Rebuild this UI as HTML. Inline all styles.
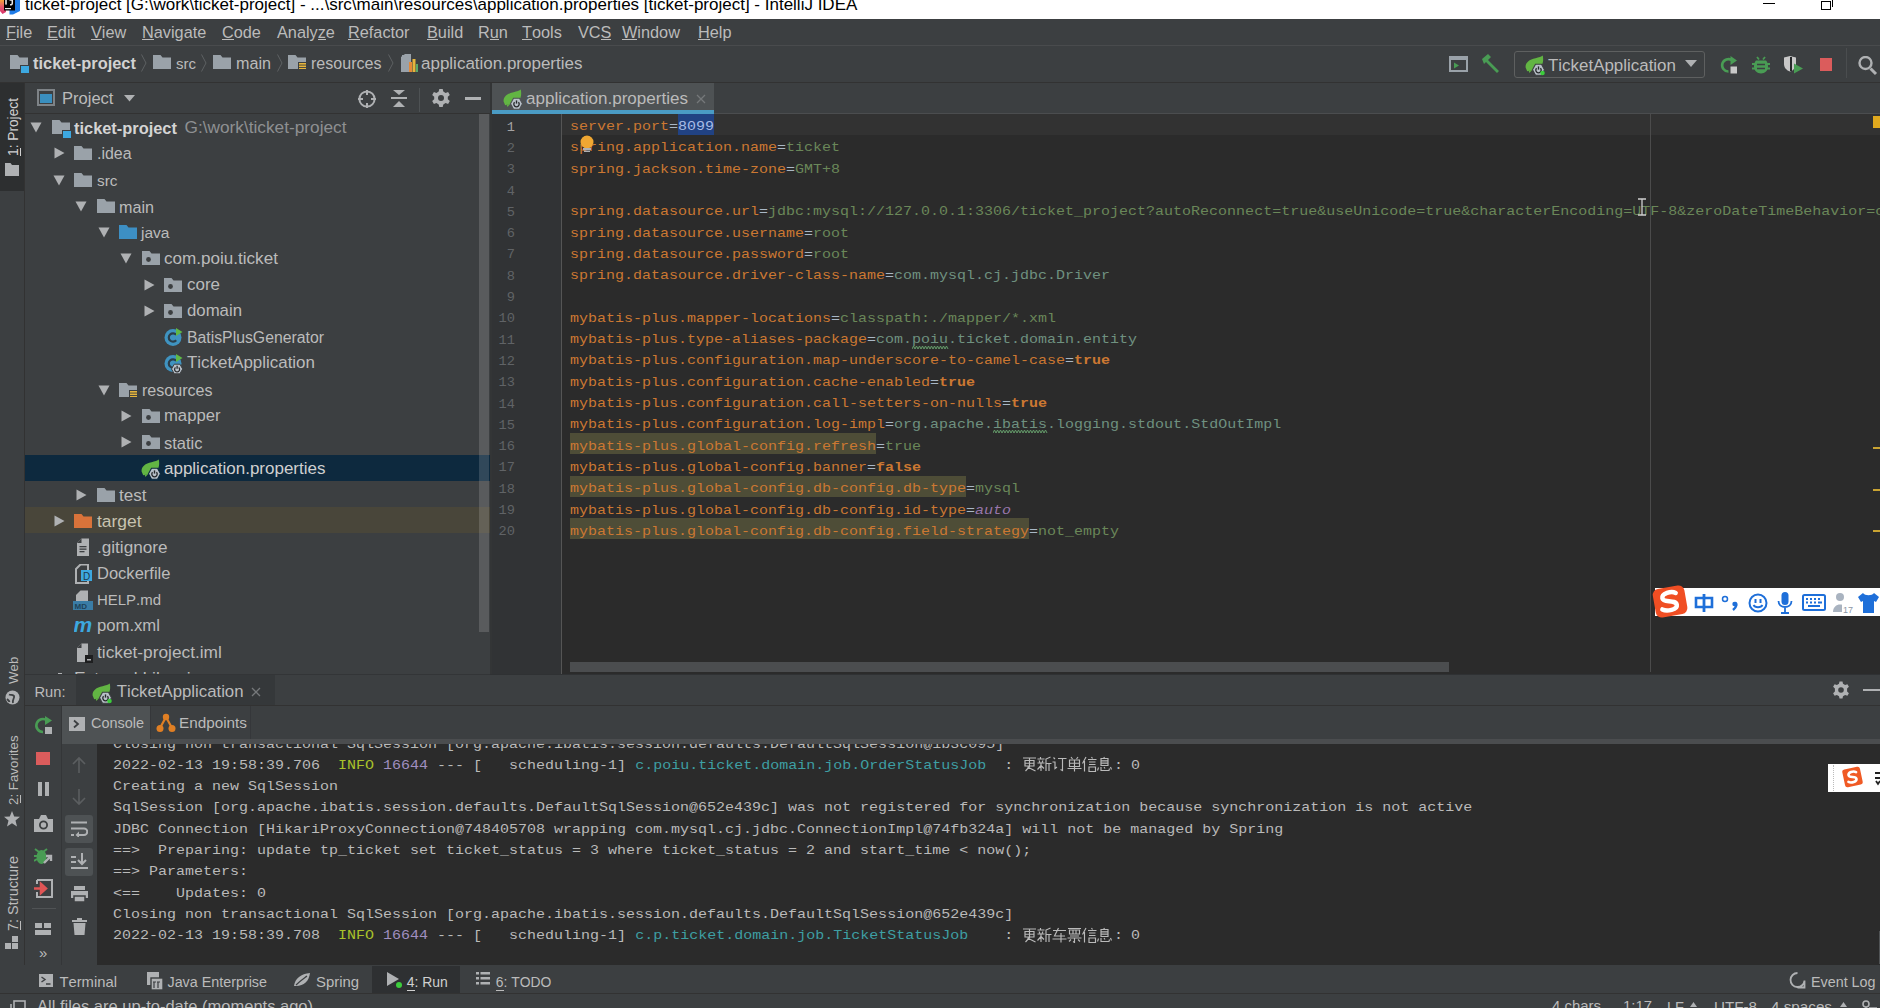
<!DOCTYPE html>
<html><head><meta charset="utf-8">
<style>
*{margin:0;padding:0;box-sizing:border-box}
html,body{width:1880px;height:1008px;overflow:hidden;background:#3C3F41;font-family:"Liberation Sans",sans-serif;color:#BBBBBB}
.a{position:absolute}
.t{position:absolute;white-space:pre;line-height:1;font-kerning:none}
</style></head><body>
<div class="a" style="left:0px;top:0px;width:1880px;height:19px;background:#FFFFFF;"></div>
<div class="a" style="left:0px;top:19px;width:1880px;height:26px;background:#3C3F41;"></div>
<div class="a" style="left:0px;top:45px;width:1880px;height:1px;background:#494B4D;"></div>
<div class="a" style="left:0px;top:46px;width:1880px;height:36px;background:#3C3F41;"></div>
<div class="a" style="left:0px;top:82px;width:1880px;height:1px;background:#323232;"></div>
<div class="a" style="left:0px;top:83px;width:24px;height:910px;background:#3C3F41;"></div>
<div class="a" style="left:0px;top:83px;width:24px;height:108px;background:#2D2F30;"></div>
<div class="a" style="left:24px;top:83px;width:1px;height:910px;background:#323232;"></div>
<div class="a" style="left:25px;top:83px;width:465px;height:30px;background:#3C3F41;"></div>
<div class="a" style="left:25px;top:113px;width:465px;height:1px;background:#323232;"></div>
<div class="a" style="left:25px;top:114px;width:465px;height:560px;background:#3C3F41;"></div>
<div class="a" style="left:492px;top:83px;width:1388px;height:30px;background:#3C3F41;"></div>
<div class="a" style="left:492px;top:83px;width:222px;height:27px;background:#4E5254;"></div>
<div class="a" style="left:492px;top:110px;width:222px;height:4px;background:#4A9BC4;"></div>
<div class="a" style="left:714px;top:113px;width:1166px;height:1px;background:#4B4D4F;"></div>
<div class="a" style="left:490px;top:83px;width:2px;height:591px;background:#333536;"></div>
<div class="a" style="left:492px;top:114px;width:70px;height:560px;background:#313335;"></div>
<div class="a" style="left:561px;top:114px;width:1px;height:560px;background:#555555;"></div>
<div class="a" style="left:562px;top:114px;width:1318px;height:560px;background:#2B2B2B;"></div>
<div class="a" style="left:25px;top:674px;width:1855px;height:1px;background:#2F3133;"></div>
<div class="a" style="left:25px;top:675px;width:1855px;height:30px;background:#3C3F41;"></div>
<div class="a" style="left:25px;top:705px;width:1855px;height:1px;background:#323232;"></div>
<div class="a" style="left:25px;top:706px;width:37px;height:259px;background:#3C3F41;"></div>
<div class="a" style="left:61px;top:706px;width:1px;height:259px;background:#343638;"></div>
<div class="a" style="left:62px;top:706px;width:1818px;height:33px;background:#3C3F41;"></div>
<div class="a" style="left:62px;top:739px;width:1818px;height:5px;background:#4B4D4F;"></div>
<div class="a" style="left:62px;top:744px;width:35px;height:221px;background:#3C3F41;"></div>
<div class="a" style="left:97px;top:744px;width:1783px;height:221px;background:#2B2B2B;"></div>
<div class="a" style="left:0px;top:965px;width:1880px;height:28px;background:#3C3F41;"></div>
<div class="a" style="left:0px;top:993px;width:1880px;height:1px;background:#323232;"></div>
<div class="a" style="left:0px;top:994px;width:1880px;height:14px;background:#3C3F41;"></div>
<div class="t" style="left:25px;top:-4.39px;font-size:17px;color:#000000;">ticket-project [G:\work\ticket-project] - ...\src\main\resources\application.properties [ticket-project] - IntelliJ IDEA</div>
<div class="a" style="left:1763px;top:3px;width:12px;height:1.3px;background:#000;"></div>
<div class="a" style="left:1821px;top:1px;width:10px;height:9px;border:1.5px solid #000;background:#fff"></div>
<div class="a" style="left:1823px;top:-2px;width:10px;height:9px;border:1.5px solid #000;border-left:none;border-bottom:none"></div>
<svg class="a" style="left:0px;top:0px;" width="21" height="15" viewBox="0 0 21 15"><defs><linearGradient id="ijg" x1="0" y1="0" x2="0" y2="1"><stop offset="0" stop-color="#F5A13A"/><stop offset="0.5" stop-color="#E8556A"/><stop offset="1" stop-color="#D6336C"/></linearGradient></defs><path d="M0 0H6V12L2.5 14L0 11Z" fill="url(#ijg)"/><path d="M12 0H20V11L13 14.5H9.5V10Z" fill="#1E7CE8"/><rect x="4" y="0" width="11" height="10.5" fill="#000"/><rect x="5.2" y="0" width="1.6" height="4.6" fill="#E8E8E8"/><path d="M9.5 0H12.3V3.2C12.3 4.4 11.5 4.8 10 4.8" stroke="#E8E8E8" stroke-width="1.5" fill="none"/><rect x="5" y="8" width="6" height="1.2" fill="#E8E8E8"/></svg>
<div class="t" style="left:6px;top:24.20px;font-size:16.3px;color:#BBBBBB;">File</div>
<div class="t" style="left:47px;top:24.20px;font-size:16.3px;color:#BBBBBB;">Edit</div>
<div class="t" style="left:91px;top:24.20px;font-size:16.3px;color:#BBBBBB;">View</div>
<div class="t" style="left:142px;top:24.20px;font-size:16.3px;color:#BBBBBB;">Navigate</div>
<div class="t" style="left:222px;top:24.20px;font-size:16.3px;color:#BBBBBB;">Code</div>
<div class="t" style="left:277px;top:24.20px;font-size:16.3px;color:#BBBBBB;">Analyze</div>
<div class="t" style="left:348px;top:24.20px;font-size:16.3px;color:#BBBBBB;">Refactor</div>
<div class="t" style="left:427px;top:24.20px;font-size:16.3px;color:#BBBBBB;">Build</div>
<div class="t" style="left:478px;top:24.20px;font-size:16.3px;color:#BBBBBB;">Run</div>
<div class="t" style="left:522px;top:24.20px;font-size:16.3px;color:#BBBBBB;">Tools</div>
<div class="t" style="left:578px;top:24.20px;font-size:16.3px;color:#BBBBBB;">VCS</div>
<div class="t" style="left:622px;top:24.20px;font-size:16.3px;color:#BBBBBB;">Window</div>
<div class="t" style="left:698px;top:24.20px;font-size:16.3px;color:#BBBBBB;">Help</div>
<div class="a" style="left:6.0px;top:39px;width:10.0px;height:1.2px;background:#BBBBBB;"></div>
<div class="a" style="left:47.0px;top:39px;width:10.9px;height:1.2px;background:#BBBBBB;"></div>
<div class="a" style="left:91.0px;top:39px;width:10.9px;height:1.2px;background:#BBBBBB;"></div>
<div class="a" style="left:142.0px;top:39px;width:11.8px;height:1.2px;background:#BBBBBB;"></div>
<div class="a" style="left:222.0px;top:39px;width:11.8px;height:1.2px;background:#BBBBBB;"></div>
<div class="a" style="left:317.8px;top:39px;width:8.2px;height:1.2px;background:#BBBBBB;"></div>
<div class="a" style="left:348.0px;top:39px;width:11.8px;height:1.2px;background:#BBBBBB;"></div>
<div class="a" style="left:427.0px;top:39px;width:10.9px;height:1.2px;background:#BBBBBB;"></div>
<div class="a" style="left:489.8px;top:39px;width:9.1px;height:1.2px;background:#BBBBBB;"></div>
<div class="a" style="left:522.0px;top:39px;width:10.0px;height:1.2px;background:#BBBBBB;"></div>
<div class="a" style="left:600.6px;top:39px;width:10.9px;height:1.2px;background:#BBBBBB;"></div>
<div class="a" style="left:622.0px;top:39px;width:15.4px;height:1.2px;background:#BBBBBB;"></div>
<div class="a" style="left:698.0px;top:39px;width:11.8px;height:1.2px;background:#BBBBBB;"></div>
<svg class="a" style="left:10px;top:55px;" width="18" height="14" viewBox="0 0 18 14"><path d="M0 0H7.5L9.5 2.5H18V14H0Z" fill="#9AA2A9"/></svg>
<div class="a" style="left:21px;top:66px;width:8px;height:7px;background:#3DA8E0;"></div>
<div class="a" style="left:20px;top:65px;width:10px;height:9px;border:1px solid #3C3F41;background:#3DA8E0"></div>
<div class="t" style="left:33px;top:55.11px;font-size:16.4px;color:#D2D2D2;font-weight:bold;">ticket-project</div>
<svg class="a" style="left:141px;top:54px;" width="6" height="18" viewBox="0 0 6 18"><path d="M0.5 0.5L5 9L0.5 17.5" stroke="#5E6163" stroke-width="1" fill="none"/></svg>
<svg class="a" style="left:153px;top:55px;" width="18" height="14" viewBox="0 0 18 14"><path d="M0 0H7.5L9.5 2.5H18V14H0Z" fill="#9AA2A9"/></svg>
<div class="t" style="left:176px;top:56.30px;font-size:15.0px;color:#BBBBBB;">src</div>
<svg class="a" style="left:201px;top:54px;" width="6" height="18" viewBox="0 0 6 18"><path d="M0.5 0.5L5 9L0.5 17.5" stroke="#5E6163" stroke-width="1" fill="none"/></svg>
<svg class="a" style="left:213px;top:55px;" width="18" height="14" viewBox="0 0 18 14"><path d="M0 0H7.5L9.5 2.5H18V14H0Z" fill="#9AA2A9"/></svg>
<div class="t" style="left:236px;top:55.33px;font-size:16.15px;color:#BBBBBB;">main</div>
<svg class="a" style="left:277px;top:54px;" width="6" height="18" viewBox="0 0 6 18"><path d="M0.5 0.5L5 9L0.5 17.5" stroke="#5E6163" stroke-width="1" fill="none"/></svg>
<svg class="a" style="left:288px;top:55px;" width="18" height="14" viewBox="0 0 18 14"><path d="M0 0H7.5L9.5 2.5H18V14H0Z" fill="#9AA2A9"/><rect x="10" y="7" width="8" height="8" fill="#3C3F41"/><rect x="11" y="8" width="7" height="1.6" fill="#E6B53C"/><rect x="11" y="10.5" width="7" height="1.6" fill="#E6B53C"/><rect x="11" y="13" width="7" height="1.6" fill="#E6B53C"/></svg>
<div class="t" style="left:311px;top:55.40px;font-size:16.06px;color:#BBBBBB;">resources</div>
<svg class="a" style="left:388px;top:54px;" width="6" height="18" viewBox="0 0 6 18"><path d="M0.5 0.5L5 9L0.5 17.5" stroke="#5E6163" stroke-width="1" fill="none"/></svg>
<svg class="a" style="left:400px;top:53px;" width="18" height="20" viewBox="0 0 18 20"><path d="M2 2H9V8H2Z" fill="#9AA2A9"/><path d="M0 8H2V2L6 -1" fill="none"/><path d="M1 4L5 1H11V19H1Z" fill="#9AA2A9"/><rect x="9" y="9" width="3" height="10" fill="#E2893A"/><rect x="12.5" y="6" width="3" height="13" fill="#E6B53C"/><rect x="16" y="11" width="2" height="8" fill="#59A869"/></svg>
<div class="t" style="left:421px;top:54.61px;font-size:16.99px;color:#BBBBBB;">application.properties</div>
<svg class="a" style="left:1449px;top:56px;" width="19" height="17" viewBox="0 0 19 17"><rect x="1" y="1" width="17" height="14" fill="none" stroke="#9AA2A9" stroke-width="2"/><rect x="1" y="1" width="17" height="3" fill="#9AA2A9"/><path d="M5 6.5L10 9.5L5 12.5Z" fill="#499C54"/></svg>
<svg class="a" style="left:1480px;top:53px;" width="22" height="20" viewBox="0 0 22 20"><path d="M2 6L8 1L11 4L8 7L19 18L17 20L6 9L4 11Z" fill="#499C54"/></svg>
<div class="a" style="left:1514px;top:51px;width:191px;height:27px;border:1px solid #5E6060;border-radius:3px;background:#3C3F41"></div>
<svg class="a" style="left:1525px;top:55px;" width="21" height="21" viewBox="0 0 21 21"><path d="M0.6 12.5C0.2 7.5 4.5 4.5 10.5 3.3C14 2.6 16.5 1.5 17.8 0.6C18.6 5 18.4 9.5 15 12C11.5 14.5 6 15.2 2.2 16.3Z" fill="#62B543"/><path d="M3.5 15.5L4.5 18L7 15" fill="#62B543"/><path d="M7.5 14.8L10.5 9.3H16.5L19.5 14.8L16.5 20.3H10.5Z" fill="#B9C1C9" stroke="#3C3F41" stroke-width="1.1"/><path d="M11.6 13.2A2.7 2.7 0 1 0 15.4 13.2" stroke="#26282A" stroke-width="1.3" fill="none"/><path d="M13.5 11.4V14.6" stroke="#26282A" stroke-width="1.4"/><circle cx="17.5" cy="18" r="2.3" fill="#3CCC3C"/></svg>
<div class="t" style="left:1548px;top:57.67px;font-size:16.93px;color:#BBBBBB;">TicketApplication</div>
<svg class="a" style="left:1685px;top:60px;" width="12" height="8" viewBox="0 0 12 8"><path d="M0 0H12L6 7Z" fill="#AFB1B3"/></svg>
<svg class="a" style="left:1720px;top:56px;" width="18" height="18" viewBox="0 0 18 18"><path d="M8.5 15.5A6.2 6.2 0 1 1 12 4.3" stroke="#499C54" stroke-width="2.6" fill="none"/><path d="M10.5 0L17 4.5L10.5 9Z" fill="#499C54"/><rect x="10.5" y="10.5" width="6.5" height="7" fill="#C8C8C8"/></svg>
<svg class="a" style="left:1752px;top:56px;" width="18" height="18" viewBox="0 0 18 18"><path d="M5 1L7 3.5M13 1L11 3.5" stroke="#499C54" stroke-width="1.8"/><path d="M4 4.5H14C15.5 6 16 8 16 10.5C16 14.5 13 17.5 9 17.5C5 17.5 2 14.5 2 10.5C2 8 2.5 6 4 4.5Z" fill="#499C54"/><path d="M0 8H3M15 8H18M0 12.5H3M15 12.5H18" stroke="#499C54" stroke-width="1.8"/><path d="M5 8.5H13M5 12.5H13" stroke="#3C3F41" stroke-width="1.6"/></svg>
<svg class="a" style="left:1783px;top:56px;" width="21" height="18" viewBox="0 0 21 18"><path d="M1 1.5L7 0L13 1.5V8C13 11.5 10.5 14.5 7 15.5C3.5 14.5 1 11.5 1 8Z" fill="#C8C8C8"/><path d="M8 1V15" stroke="#26282A" stroke-width="2"/><path d="M11 7.5L20 12.5L11 17.5Z" fill="#499C54"/></svg>
<div class="a" style="left:1820px;top:58px;width:12px;height:12.5px;background:#DB5C5C;"></div>
<div class="a" style="left:1846px;top:48px;width:1px;height:30px;background:#4A4D4F;"></div>
<svg class="a" style="left:1858px;top:56px;" width="20" height="20" viewBox="0 0 20 20"><circle cx="7.5" cy="7" r="6" stroke="#AFB1B3" stroke-width="2.4" fill="none"/><path d="M12.5 12.5L18 18" stroke="#AFB1B3" stroke-width="3"/></svg>
<div class="t" style="left:6.87px;top:156px;font-size:13.73px;color:#D0D0D0;transform:rotate(-90deg);transform-origin:0 0;">1: Project</div>
<div class="a" style="left:19.5px;top:148px;width:1px;height:8px;background:#D0D0D0;"></div>
<svg class="a" style="left:5px;top:163px;" width="14" height="13" viewBox="0 0 14 13"><path d="M0 0H5.5L7 2H14V13H0Z" fill="#AFB1B3"/></svg>
<div class="t" style="left:6.91px;top:684px;font-size:13.33px;color:#BBBBBB;transform:rotate(-90deg);transform-origin:0 0;">Web</div>
<svg class="a" style="left:5px;top:690px;" width="15" height="15" viewBox="0 0 15 15"><circle cx="7.5" cy="7.5" r="7" fill="#AFB1B3"/><path d="M4 4.5C6 5.5 7 4 9 6C10 8 7 9.5 8 13M2 9C3 10 4 10.5 4.5 12" stroke="#3C3F41" stroke-width="1.8" fill="none"/></svg>
<div class="t" style="left:6.91px;top:804.5px;font-size:13.34px;color:#BBBBBB;transform:rotate(-90deg);transform-origin:0 0;">2: Favorites</div>
<div class="a" style="left:19.5px;top:795px;width:1px;height:8px;background:#BBBBBB;"></div>
<svg class="a" style="left:4px;top:811px;" width="16" height="16" viewBox="0 0 16 16"><path d="M8 0L10.2 5.5L16 5.8L11.5 9.5L13 15.5L8 12.2L3 15.5L4.5 9.5L0 5.8L5.8 5.5Z" fill="#AFB1B3"/></svg>
<div class="t" style="left:5.91px;top:930.7px;font-size:14.51px;color:#BBBBBB;transform:rotate(-90deg);transform-origin:0 0;">7: Structure</div>
<div class="a" style="left:19.5px;top:921px;width:1px;height:9px;background:#BBBBBB;"></div>
<svg class="a" style="left:5px;top:936px;" width="14" height="14" viewBox="0 0 14 14"><rect x="7" y="0" width="6" height="6" fill="#AFB1B3"/><rect x="0" y="7" width="6" height="6" fill="#AFB1B3"/><rect x="7" y="7" width="6" height="6" fill="#AFB1B3"/></svg>
<svg class="a" style="left:37px;top:89px;" width="18" height="17" viewBox="0 0 18 17"><rect x="1" y="1" width="16" height="15" fill="none" stroke="#7E8387" stroke-width="2"/><rect x="3" y="5" width="12" height="9" fill="#3A8FBF"/></svg>
<div class="t" style="left:62px;top:90.99px;font-size:16.55px;color:#BBBBBB;">Project</div>
<svg class="a" style="left:124px;top:95px;" width="12" height="8" viewBox="0 0 12 8"><path d="M0 0H11L5.5 6.5Z" fill="#AFB1B3"/></svg>
<svg class="a" style="left:357px;top:89px;" width="20" height="20" viewBox="0 0 20 20"><circle cx="10" cy="10" r="7.6" stroke="#AFB1B3" stroke-width="2" fill="none"/><path d="M10 1V6M10 14V19M1 10H6M14 10H19" stroke="#AFB1B3" stroke-width="2"/></svg>
<svg class="a" style="left:390px;top:89px;" width="18" height="19" viewBox="0 0 18 19"><path d="M3 1H15L9 6Z" fill="#AFB1B3"/><rect x="1" y="8" width="16" height="2" fill="#AFB1B3"/><path d="M3 18H15L9 12Z" fill="#AFB1B3"/></svg>
<div class="a" style="left:419px;top:88px;width:1px;height:24px;background:#4E5254;"></div>
<svg class="a" style="left:431px;top:88px;" width="20" height="20" viewBox="0 0 20 20"><path d="M8.3 1H11.7L12.3 3.6L14.6 4.9L17.1 4L18.8 6.9L16.8 8.7V11.3L18.8 13.1L17.1 16L14.6 15.1L12.3 16.4L11.7 19H8.3L7.7 16.4L5.4 15.1L2.9 16L1.2 13.1L3.2 11.3V8.7L1.2 6.9L2.9 4L5.4 4.9L7.7 3.6Z" fill="#AFB1B3"/><circle cx="10" cy="10" r="3" fill="#3C3F41"/></svg>
<div class="a" style="left:465px;top:97px;width:16px;height:3px;background:#AFB1B3;"></div>
<div class="a" style="left:25px;top:455px;width:465px;height:26px;background:#0D293E;"></div>
<div class="a" style="left:25px;top:507px;width:465px;height:26px;background:#49463A;"></div>
<svg class="a" style="left:30.0px;top:122.0px;" width="12" height="11" viewBox="0 0 12 11"><path d="M0.5 0.5H11.5L6 10.5Z" fill="#AFB1B3"/></svg>
<svg class="a" style="left:52px;top:120.0px;" width="18" height="14" viewBox="0 0 18 14"><path d="M0 0H7.5L9.5 2.5H18V14H0Z" fill="#9AA2A9"/></svg>
<div class="a" style="left:62px;top:130.0px;width:10px;height:9px;border:1px solid #3C3F41;background:#3DA8E0"></div>
<div class="t" style="left:74px;top:119.61px;font-size:16.4px;color:#D4D4D4;font-weight:bold;">ticket-project</div>
<div class="t" style="left:184.5px;top:118.89px;font-size:17.25px;color:#8E9092;">G:\work\ticket-project</div>
<svg class="a" style="left:53.6px;top:147.2px;" width="11" height="12" viewBox="0 0 11 12"><path d="M0.5 0.5L10.5 6L0.5 11.5Z" fill="#AFB1B3"/></svg>
<svg class="a" style="left:74px;top:146.25px;" width="18" height="14" viewBox="0 0 18 14"><path d="M0 0H7.5L9.5 2.5H18V14H0Z" fill="#9AA2A9"/></svg>
<div class="t" style="left:97px;top:146.28px;font-size:15.91px;color:#BBBBBB;">.idea</div>
<svg class="a" style="left:52.6px;top:174.5px;" width="12" height="11" viewBox="0 0 12 11"><path d="M0.5 0.5H11.5L6 10.5Z" fill="#AFB1B3"/></svg>
<svg class="a" style="left:74px;top:172.5px;" width="18" height="14" viewBox="0 0 18 14"><path d="M0 0H7.5L9.5 2.5H18V14H0Z" fill="#9AA2A9"/></svg>
<div class="t" style="left:97px;top:172.98px;font-size:15.38px;color:#BBBBBB;">src</div>
<svg class="a" style="left:75.2px;top:200.8px;" width="12" height="11" viewBox="0 0 12 11"><path d="M0.5 0.5H11.5L6 10.5Z" fill="#AFB1B3"/></svg>
<svg class="a" style="left:97px;top:198.75px;" width="18" height="14" viewBox="0 0 18 14"><path d="M0 0H7.5L9.5 2.5H18V14H0Z" fill="#9AA2A9"/></svg>
<div class="t" style="left:119px;top:198.58px;font-size:16.15px;color:#BBBBBB;">main</div>
<svg class="a" style="left:97.8px;top:227.0px;" width="12" height="11" viewBox="0 0 12 11"><path d="M0.5 0.5H11.5L6 10.5Z" fill="#AFB1B3"/></svg>
<svg class="a" style="left:119px;top:225.0px;" width="18" height="14" viewBox="0 0 18 14"><path d="M0 0H7.5L9.5 2.5H18V14H0Z" fill="#3D8FC4"/></svg>
<div class="t" style="left:141px;top:225.34px;font-size:15.54px;color:#BBBBBB;">java</div>
<svg class="a" style="left:120.4px;top:253.2px;" width="12" height="11" viewBox="0 0 12 11"><path d="M0.5 0.5H11.5L6 10.5Z" fill="#AFB1B3"/></svg>
<svg class="a" style="left:142px;top:251.25px;" width="18" height="14" viewBox="0 0 18 14"><path d="M0 0H7.5L9.5 2.5H18V14H0Z" fill="#9AA2A9"/><circle cx="6.5" cy="8.5" r="2.4" fill="#3C3F41"/></svg>
<div class="t" style="left:164px;top:250.28px;font-size:17.09px;color:#BBBBBB;">com.poiu.ticket</div>
<svg class="a" style="left:144.0px;top:278.5px;" width="11" height="12" viewBox="0 0 11 12"><path d="M0.5 0.5L10.5 6L0.5 11.5Z" fill="#AFB1B3"/></svg>
<svg class="a" style="left:164px;top:277.5px;" width="18" height="14" viewBox="0 0 18 14"><path d="M0 0H7.5L9.5 2.5H18V14H0Z" fill="#9AA2A9"/><circle cx="6.5" cy="8.5" r="2.4" fill="#3C3F41"/></svg>
<div class="t" style="left:187px;top:276.64px;font-size:16.96px;color:#BBBBBB;">core</div>
<svg class="a" style="left:144.0px;top:304.8px;" width="11" height="12" viewBox="0 0 11 12"><path d="M0.5 0.5L10.5 6L0.5 11.5Z" fill="#AFB1B3"/></svg>
<svg class="a" style="left:164px;top:303.75px;" width="18" height="14" viewBox="0 0 18 14"><path d="M0 0H7.5L9.5 2.5H18V14H0Z" fill="#9AA2A9"/><circle cx="6.5" cy="8.5" r="2.4" fill="#3C3F41"/></svg>
<div class="t" style="left:187px;top:303.05px;font-size:16.77px;color:#BBBBBB;">domain</div>
<svg class="a" style="left:164px;top:327.5px;" width="20" height="21" viewBox="0 0 20 21"><circle cx="9" cy="9.5" r="8.5" fill="#3F93C0"/><path d="M12.2 6.8A4.2 4.2 0 1 0 12.2 12.2" stroke="#2B3E4A" stroke-width="2.2" fill="none"/><path d="M12 0L18.5 4L12 8Z" fill="#5FB946"/></svg>
<div class="t" style="left:187px;top:330.12px;font-size:15.8px;color:#BBBBBB;">BatisPlusGenerator</div>
<svg class="a" style="left:164px;top:353.75px;" width="20" height="21" viewBox="0 0 20 21"><circle cx="9" cy="9.5" r="8.5" fill="#3F93C0"/><path d="M12.2 6.8A4.2 4.2 0 1 0 12.2 12.2" stroke="#2B3E4A" stroke-width="2.2" fill="none"/><path d="M12 0L18.5 4L12 8Z" fill="#5FB946"/><path d="M7.5 15L10.3 10.2H15.9L18.7 15L15.9 19.8H10.3Z" fill="#B9C1C9" stroke="#3C3F41" stroke-width="1"/><path d="M11.5 13.5A2.5 2.5 0 1 0 14.7 13.5" stroke="#26282A" stroke-width="1.2" fill="none"/><path d="M13.1 11.8V14.8" stroke="#26282A" stroke-width="1.3"/></svg>
<div class="t" style="left:187px;top:355.42px;font-size:16.93px;color:#BBBBBB;">TicketApplication</div>
<svg class="a" style="left:97.8px;top:384.5px;" width="12" height="11" viewBox="0 0 12 11"><path d="M0.5 0.5H11.5L6 10.5Z" fill="#AFB1B3"/></svg>
<svg class="a" style="left:119px;top:382.5px;" width="18" height="14" viewBox="0 0 18 14"><path d="M0 0H7.5L9.5 2.5H18V14H0Z" fill="#9AA2A9"/><rect x="10" y="7" width="8" height="8" fill="#3C3F41"/><rect x="11" y="8" width="7" height="1.6" fill="#E6B53C"/><rect x="11" y="10.5" width="7" height="1.6" fill="#E6B53C"/><rect x="11" y="13" width="7" height="1.6" fill="#E6B53C"/></svg>
<div class="t" style="left:142px;top:382.40px;font-size:16.06px;color:#BBBBBB;">resources</div>
<svg class="a" style="left:121.4px;top:409.8px;" width="11" height="12" viewBox="0 0 11 12"><path d="M0.5 0.5L10.5 6L0.5 11.5Z" fill="#AFB1B3"/></svg>
<svg class="a" style="left:142px;top:408.75px;" width="18" height="14" viewBox="0 0 18 14"><path d="M0 0H7.5L9.5 2.5H18V14H0Z" fill="#9AA2A9"/><circle cx="6.5" cy="8.5" r="2.4" fill="#3C3F41"/></svg>
<div class="t" style="left:164px;top:408.14px;font-size:16.66px;color:#BBBBBB;">mapper</div>
<svg class="a" style="left:121.4px;top:436.0px;" width="11" height="12" viewBox="0 0 11 12"><path d="M0.5 0.5L10.5 6L0.5 11.5Z" fill="#AFB1B3"/></svg>
<svg class="a" style="left:142px;top:435.0px;" width="18" height="14" viewBox="0 0 18 14"><path d="M0 0H7.5L9.5 2.5H18V14H0Z" fill="#9AA2A9"/><circle cx="6.5" cy="8.5" r="2.4" fill="#3C3F41"/></svg>
<div class="t" style="left:164px;top:434.53px;font-size:16.5px;color:#BBBBBB;">static</div>
<svg class="a" style="left:141px;top:458.75px;" width="21" height="21" viewBox="0 0 21 21"><path d="M0.6 12.5C0.2 7.5 4.5 4.5 10.5 3.3C14 2.6 16.5 1.5 17.8 0.6C18.6 5 18.4 9.5 15 12C11.5 14.5 6 15.2 2.2 16.3Z" fill="#62B543"/><path d="M3.5 15.5L4.5 18L7 15" fill="#62B543"/><path d="M7.5 14.8L10.5 9.3H16.5L19.5 14.8L16.5 20.3H10.5Z" fill="#B9C1C9" stroke="#0D293E" stroke-width="1.1"/><path d="M11.6 13.2A2.7 2.7 0 1 0 15.4 13.2" stroke="#26282A" stroke-width="1.3" fill="none"/><path d="M13.5 11.4V14.6" stroke="#26282A" stroke-width="1.4"/></svg>
<div class="t" style="left:164px;top:460.36px;font-size:16.99px;color:#D0D0D0;">application.properties</div>
<svg class="a" style="left:76.2px;top:488.5px;" width="11" height="12" viewBox="0 0 11 12"><path d="M0.5 0.5L10.5 6L0.5 11.5Z" fill="#AFB1B3"/></svg>
<svg class="a" style="left:97px;top:487.5px;" width="18" height="14" viewBox="0 0 18 14"><path d="M0 0H7.5L9.5 2.5H18V14H0Z" fill="#9AA2A9"/></svg>
<div class="t" style="left:119px;top:486.56px;font-size:17.06px;color:#BBBBBB;">test</div>
<svg class="a" style="left:53.6px;top:514.8px;" width="11" height="12" viewBox="0 0 11 12"><path d="M0.5 0.5L10.5 6L0.5 11.5Z" fill="#AFB1B3"/></svg>
<svg class="a" style="left:74px;top:513.75px;" width="18" height="14" viewBox="0 0 18 14"><path d="M0 0H7.5L9.5 2.5H18V14H0Z" fill="#D9733A"/></svg>
<div class="t" style="left:97px;top:512.52px;font-size:17.4px;color:#C8C3B0;">target</div>
<svg class="a" style="left:76px;top:538.0px;" width="16" height="19" viewBox="0 0 16 19"><path d="M1 5L5.5 0.5H13V18H1Z" fill="#AFB1B3"/><path d="M1 5H5.5V0.5" fill="#3C3F41"/><rect x="3.5" y="8" width="7" height="1.3" fill="#3C3F41"/><rect x="3.5" y="10.5" width="7" height="1.3" fill="#3C3F41"/><rect x="3.5" y="13" width="5" height="1.3" fill="#3C3F41"/></svg>
<div class="t" style="left:97px;top:538.99px;font-size:17.14px;color:#BBBBBB;">.gitignore</div>
<svg class="a" style="left:75px;top:563.75px;" width="18" height="20" viewBox="0 0 18 20"><path d="M1 5L5.5 0.5H13V19H1Z" fill="none" stroke="#AFB1B3" stroke-width="2"/><rect x="6" y="6" width="11" height="11" fill="#3DA8E0"/><text x="8" y="15.5" font-size="10" font-family="Liberation Sans" fill="#1E3A4C">D</text></svg>
<div class="t" style="left:97px;top:565.75px;font-size:16.53px;color:#BBBBBB;">Dockerfile</div>
<svg class="a" style="left:73px;top:590.0px;" width="20" height="20" viewBox="0 0 20 20"><path d="M3 5L7.5 0.5H15V12H3Z" fill="#AFB1B3"/><rect x="0" y="11" width="20" height="9" fill="#3A7CA5"/><text x="1.5" y="18.8" font-size="8" font-family="Liberation Sans" font-weight="bold" fill="#1F4258">MD</text></svg>
<div class="t" style="left:97px;top:593.33px;font-size:14.96px;color:#BBBBBB;">HELP.md</div>
<svg class="a" style="left:74px;top:617.75px;" width="20" height="16" viewBox="0 0 20 16"><text x="-0.5" y="14" font-size="21" font-style="italic" font-weight="bold" font-family="Liberation Sans" fill="#3DA8E0">m</text></svg>
<div class="t" style="left:97px;top:618.14px;font-size:16.67px;color:#BBBBBB;">pom.xml</div>
<svg class="a" style="left:75px;top:642.5px;" width="19" height="20" viewBox="0 0 19 20"><path d="M2 5L6.5 0.5H13V19H2Z" fill="#AFB1B3"/><path d="M2 5H6.5V0.5" fill="#3C3F41"/><rect x="10" y="12" width="8" height="8" fill="#1E1F20"/><rect x="12" y="16" width="4" height="1.5" fill="#AFB1B3"/></svg>
<div class="t" style="left:97px;top:643.85px;font-size:17.3px;color:#BBBBBB;">ticket-project.iml</div>
<svg class="a" style="left:52px;top:671.25px;" width="18" height="14" viewBox="0 0 18 14"><rect x="0" y="6" width="4" height="8" fill="#AFB1B3"/><rect x="6" y="2" width="4" height="12" fill="#AFB1B3"/><rect x="12" y="8" width="5" height="5" fill="#3DA8E0"/></svg>
<div class="t" style="left:74px;top:670.06px;font-size:17.35px;color:#BBBBBB;">External Libraries</div>
<div class="a" style="left:479px;top:114px;width:10px;height:518px;background:rgba(255,255,255,0.15);"></div>
<svg class="a" style="left:503px;top:89px;" width="21" height="21" viewBox="0 0 21 21"><path d="M0.6 12.5C0.2 7.5 4.5 4.5 10.5 3.3C14 2.6 16.5 1.5 17.8 0.6C18.6 5 18.4 9.5 15 12C11.5 14.5 6 15.2 2.2 16.3Z" fill="#62B543"/><path d="M3.5 15.5L4.5 18L7 15" fill="#62B543"/><path d="M7.5 14.8L10.5 9.3H16.5L19.5 14.8L16.5 20.3H10.5Z" fill="#B9C1C9" stroke="#4E5254" stroke-width="1.1"/><path d="M11.6 13.2A2.7 2.7 0 1 0 15.4 13.2" stroke="#26282A" stroke-width="1.3" fill="none"/><path d="M13.5 11.4V14.6" stroke="#26282A" stroke-width="1.4"/></svg>
<div class="t" style="left:526px;top:89.57px;font-size:17.04px;color:#BBBBBB;">application.properties</div>
<svg class="a" style="left:696px;top:94px;" width="10" height="10" viewBox="0 0 10 10"><path d="M1 1L9 9M9 1L1 9" stroke="#75787A" stroke-width="1.3"/></svg>
<div class="a" style="left:562px;top:114px;width:1318px;height:21px;background:#323232;"></div>
<div class="a" style="left:678px;top:114px;width:36px;height:21px;background:#214283;"></div>
<div class="a" style="left:570px;top:433.1px;width:306px;height:21px;background:#4E4D37;"></div>
<div class="a" style="left:570px;top:475.7px;width:396px;height:21px;background:#4E4D37;"></div>
<div class="a" style="left:570px;top:518.3px;width:459px;height:21px;background:#4E4D37;"></div>
<div class="t" style="left:570px;top:119.11px;font-size:15px;color:#A9B7C6;font-family:'Liberation Mono',monospace;transform:scaleY(0.88);transform-origin:0 11.49px;"><span style="color:#CC7832">server.port</span><span style="color:#A9B7C6">=</span><span style="color:#A8BCE6">8099</span></div>
<div class="t" style="left:570px;top:140.41px;font-size:15px;color:#A9B7C6;font-family:'Liberation Mono',monospace;transform:scaleY(0.88);transform-origin:0 11.49px;"><span style="color:#CC7832">spring.application.name</span><span style="color:#A9B7C6">=</span><span style="color:#6A8759">ticket</span></div>
<div class="t" style="left:570px;top:161.71px;font-size:15px;color:#A9B7C6;font-family:'Liberation Mono',monospace;transform:scaleY(0.88);transform-origin:0 11.49px;"><span style="color:#CC7832">spring.jackson.time-zone</span><span style="color:#A9B7C6">=</span><span style="color:#6A8759">GMT+8</span></div>
<div class="t" style="left:570px;top:204.31px;font-size:15px;color:#A9B7C6;font-family:'Liberation Mono',monospace;transform:scaleY(0.88);transform-origin:0 11.49px;"><span style="color:#CC7832">spring.datasource.url</span><span style="color:#A9B7C6">=</span><span style="color:#6A8759">jdbc:mysql://127.0.0.1:3306/ticket_project?autoReconnect=true&amp;useUnicode=true&amp;characterEncoding=UTF-8&amp;zeroDateTimeBehavior=convertToNull</span></div>
<div class="t" style="left:570px;top:225.61px;font-size:15px;color:#A9B7C6;font-family:'Liberation Mono',monospace;transform:scaleY(0.88);transform-origin:0 11.49px;"><span style="color:#CC7832">spring.datasource.username</span><span style="color:#A9B7C6">=</span><span style="color:#6A8759">root</span></div>
<div class="t" style="left:570px;top:246.91px;font-size:15px;color:#A9B7C6;font-family:'Liberation Mono',monospace;transform:scaleY(0.88);transform-origin:0 11.49px;"><span style="color:#CC7832">spring.datasource.password</span><span style="color:#A9B7C6">=</span><span style="color:#6A8759">root</span></div>
<div class="t" style="left:570px;top:268.21px;font-size:15px;color:#A9B7C6;font-family:'Liberation Mono',monospace;transform:scaleY(0.88);transform-origin:0 11.49px;"><span style="color:#CC7832">spring.datasource.driver-class-name</span><span style="color:#A9B7C6">=</span><span style="color:#6F9180">com.mysql.cj.jdbc.Driver</span></div>
<div class="t" style="left:570px;top:310.81px;font-size:15px;color:#A9B7C6;font-family:'Liberation Mono',monospace;transform:scaleY(0.88);transform-origin:0 11.49px;"><span style="color:#CC7832">mybatis-plus.mapper-locations</span><span style="color:#A9B7C6">=</span><span style="color:#6A8759">classpath:./mapper/*.xml</span></div>
<div class="t" style="left:570px;top:332.11px;font-size:15px;color:#A9B7C6;font-family:'Liberation Mono',monospace;transform:scaleY(0.88);transform-origin:0 11.49px;"><span style="color:#CC7832">mybatis-plus.type-aliases-package</span><span style="color:#A9B7C6">=</span><span style="color:#6F9180">com.poiu.ticket.domain.entity</span></div>
<div class="t" style="left:570px;top:353.41px;font-size:15px;color:#A9B7C6;font-family:'Liberation Mono',monospace;transform:scaleY(0.88);transform-origin:0 11.49px;"><span style="color:#CC7832">mybatis-plus.configuration.map-underscore-to-camel-case</span><span style="color:#A9B7C6">=</span><span style="color:#CC7832;font-weight:bold">true</span></div>
<div class="t" style="left:570px;top:374.71px;font-size:15px;color:#A9B7C6;font-family:'Liberation Mono',monospace;transform:scaleY(0.88);transform-origin:0 11.49px;"><span style="color:#CC7832">mybatis-plus.configuration.cache-enabled</span><span style="color:#A9B7C6">=</span><span style="color:#CC7832;font-weight:bold">true</span></div>
<div class="t" style="left:570px;top:396.01px;font-size:15px;color:#A9B7C6;font-family:'Liberation Mono',monospace;transform:scaleY(0.88);transform-origin:0 11.49px;"><span style="color:#CC7832">mybatis-plus.configuration.call-setters-on-nulls</span><span style="color:#A9B7C6">=</span><span style="color:#CC7832;font-weight:bold">true</span></div>
<div class="t" style="left:570px;top:417.31px;font-size:15px;color:#A9B7C6;font-family:'Liberation Mono',monospace;transform:scaleY(0.88);transform-origin:0 11.49px;"><span style="color:#CC7832">mybatis-plus.configuration.log-impl</span><span style="color:#A9B7C6">=</span><span style="color:#6F9180">org.apache.ibatis.logging.stdout.StdOutImpl</span></div>
<div class="t" style="left:570px;top:438.61px;font-size:15px;color:#A9B7C6;font-family:'Liberation Mono',monospace;transform:scaleY(0.88);transform-origin:0 11.49px;"><span style="color:#CC7832">mybatis-plus.global-config.refresh</span><span style="color:#A9B7C6">=</span><span style="color:#6A8759">true</span></div>
<div class="t" style="left:570px;top:459.91px;font-size:15px;color:#A9B7C6;font-family:'Liberation Mono',monospace;transform:scaleY(0.88);transform-origin:0 11.49px;"><span style="color:#CC7832">mybatis-plus.global-config.banner</span><span style="color:#A9B7C6">=</span><span style="color:#CC7832;font-weight:bold">false</span></div>
<div class="t" style="left:570px;top:481.21px;font-size:15px;color:#A9B7C6;font-family:'Liberation Mono',monospace;transform:scaleY(0.88);transform-origin:0 11.49px;"><span style="color:#CC7832">mybatis-plus.global-config.db-config.db-type</span><span style="color:#A9B7C6">=</span><span style="color:#6A8759">mysql</span></div>
<div class="t" style="left:570px;top:502.51px;font-size:15px;color:#A9B7C6;font-family:'Liberation Mono',monospace;transform:scaleY(0.88);transform-origin:0 11.49px;"><span style="color:#CC7832">mybatis-plus.global-config.db-config.id-type</span><span style="color:#A9B7C6">=</span><span style="color:#9876AA;font-style:italic">auto</span></div>
<div class="t" style="left:570px;top:523.81px;font-size:15px;color:#A9B7C6;font-family:'Liberation Mono',monospace;transform:scaleY(0.88);transform-origin:0 11.49px;"><span style="color:#CC7832">mybatis-plus.global-config.db-config.field-strategy</span><span style="color:#A9B7C6">=</span><span style="color:#6A8759">not_empty</span></div>
<svg class="a" style="left:912px;top:346px;" width="37" height="4" viewBox="0 0 37 4"><path d="M0 3 L1.5 0 L3 3 L4.5 0 L6 3 L7.5 0 L9 3 L10.5 0 L12 3 L13.5 0 L15 3 L16.5 0 L18 3 L19.5 0 L21 3 L22.5 0 L24 3 L25.5 0 L27 3 L28.5 0 L30 3 L31.5 0 L33 3 L34.5 0 L36 3" stroke="#659C6B" stroke-width="1" fill="none"/></svg>
<svg class="a" style="left:993px;top:430px;" width="55" height="4" viewBox="0 0 55 4"><path d="M0 3 L1.5 0 L3 3 L4.5 0 L6 3 L7.5 0 L9 3 L10.5 0 L12 3 L13.5 0 L15 3 L16.5 0 L18 3 L19.5 0 L21 3 L22.5 0 L24 3 L25.5 0 L27 3 L28.5 0 L30 3 L31.5 0 L33 3 L34.5 0 L36 3 L37.5 0 L39 3 L40.5 0 L42 3 L43.5 0 L45 3 L46.5 0 L48 3 L49.5 0 L51 3 L52.5 0 L54 3" stroke="#659C6B" stroke-width="1" fill="none"/></svg>
<div class="t" style="left:506.8px;top:120.63px;font-size:13.67px;color:#A4A3A3;font-family:'Liberation Mono',monospace;transform:scaleY(0.88);transform-origin:0 10.47px;">1</div>
<div class="t" style="left:506.8px;top:141.93px;font-size:13.67px;color:#606366;font-family:'Liberation Mono',monospace;transform:scaleY(0.88);transform-origin:0 10.47px;">2</div>
<div class="t" style="left:506.8px;top:163.23px;font-size:13.67px;color:#606366;font-family:'Liberation Mono',monospace;transform:scaleY(0.88);transform-origin:0 10.47px;">3</div>
<div class="t" style="left:506.8px;top:184.53px;font-size:13.67px;color:#606366;font-family:'Liberation Mono',monospace;transform:scaleY(0.88);transform-origin:0 10.47px;">4</div>
<div class="t" style="left:506.8px;top:205.83px;font-size:13.67px;color:#606366;font-family:'Liberation Mono',monospace;transform:scaleY(0.88);transform-origin:0 10.47px;">5</div>
<div class="t" style="left:506.8px;top:227.13px;font-size:13.67px;color:#606366;font-family:'Liberation Mono',monospace;transform:scaleY(0.88);transform-origin:0 10.47px;">6</div>
<div class="t" style="left:506.8px;top:248.43px;font-size:13.67px;color:#606366;font-family:'Liberation Mono',monospace;transform:scaleY(0.88);transform-origin:0 10.47px;">7</div>
<div class="t" style="left:506.8px;top:269.73px;font-size:13.67px;color:#606366;font-family:'Liberation Mono',monospace;transform:scaleY(0.88);transform-origin:0 10.47px;">8</div>
<div class="t" style="left:506.8px;top:291.03px;font-size:13.67px;color:#606366;font-family:'Liberation Mono',monospace;transform:scaleY(0.88);transform-origin:0 10.47px;">9</div>
<div class="t" style="left:498.6px;top:312.33px;font-size:13.67px;color:#606366;font-family:'Liberation Mono',monospace;transform:scaleY(0.88);transform-origin:0 10.47px;">10</div>
<div class="t" style="left:498.6px;top:333.63px;font-size:13.67px;color:#606366;font-family:'Liberation Mono',monospace;transform:scaleY(0.88);transform-origin:0 10.47px;">11</div>
<div class="t" style="left:498.6px;top:354.93px;font-size:13.67px;color:#606366;font-family:'Liberation Mono',monospace;transform:scaleY(0.88);transform-origin:0 10.47px;">12</div>
<div class="t" style="left:498.6px;top:376.23px;font-size:13.67px;color:#606366;font-family:'Liberation Mono',monospace;transform:scaleY(0.88);transform-origin:0 10.47px;">13</div>
<div class="t" style="left:498.6px;top:397.53px;font-size:13.67px;color:#606366;font-family:'Liberation Mono',monospace;transform:scaleY(0.88);transform-origin:0 10.47px;">14</div>
<div class="t" style="left:498.6px;top:418.83px;font-size:13.67px;color:#606366;font-family:'Liberation Mono',monospace;transform:scaleY(0.88);transform-origin:0 10.47px;">15</div>
<div class="t" style="left:498.6px;top:440.13px;font-size:13.67px;color:#606366;font-family:'Liberation Mono',monospace;transform:scaleY(0.88);transform-origin:0 10.47px;">16</div>
<div class="t" style="left:498.6px;top:461.43px;font-size:13.67px;color:#606366;font-family:'Liberation Mono',monospace;transform:scaleY(0.88);transform-origin:0 10.47px;">17</div>
<div class="t" style="left:498.6px;top:482.73px;font-size:13.67px;color:#606366;font-family:'Liberation Mono',monospace;transform:scaleY(0.88);transform-origin:0 10.47px;">18</div>
<div class="t" style="left:498.6px;top:504.03px;font-size:13.67px;color:#606366;font-family:'Liberation Mono',monospace;transform:scaleY(0.88);transform-origin:0 10.47px;">19</div>
<div class="t" style="left:498.6px;top:525.33px;font-size:13.67px;color:#606366;font-family:'Liberation Mono',monospace;transform:scaleY(0.88);transform-origin:0 10.47px;">20</div>
<div class="a" style="left:1650px;top:114px;width:1px;height:558px;background:#4B4B4B;"></div>
<svg class="a" style="left:579px;top:135px;" width="16" height="18" viewBox="0 0 16 18"><circle cx="8" cy="7" r="6.5" fill="#F0A732"/><rect x="4" y="13" width="8" height="2" fill="#AFB1B3"/><rect x="5" y="15.5" width="6" height="1.5" fill="#AFB1B3"/></svg>
<svg class="a" style="left:1636px;top:198px;" width="12" height="18" viewBox="0 0 12 18"><path d="M2 1H10M6 1V17M2 17H10" stroke="#D0D0D0" stroke-width="1.3" fill="none"/></svg>
<div class="a" style="left:1873px;top:116px;width:7px;height:12px;background:#E0A91E;"></div>
<div class="a" style="left:1873px;top:447px;width:7px;height:2px;background:#C9A332;"></div>
<div class="a" style="left:1873px;top:489px;width:7px;height:2px;background:#C9A332;"></div>
<div class="a" style="left:1873px;top:530px;width:7px;height:2px;background:#C9A332;"></div>
<div class="a" style="left:570px;top:662px;width:879px;height:10px;background:#4B4D4F;"></div>
<div class="a" style="left:25px;top:674px;width:465px;height:1px;background:#333537;"></div>
<div class="a" style="left:25px;top:675px;width:1855px;height:30px;background:#3C3F41;"></div>
<div class="a" style="left:25px;top:705px;width:1855px;height:1px;background:#323232;"></div>
<div class="t" style="left:34.5px;top:684.57px;font-size:14.68px;color:#BBBBBB;">Run:</div>
<div class="a" style="left:76px;top:675px;width:199px;height:30px;background:#35383A;"></div>
<svg class="a" style="left:92px;top:683px;" width="21" height="21" viewBox="0 0 21 21"><path d="M0.6 12.5C0.2 7.5 4.5 4.5 10.5 3.3C14 2.6 16.5 1.5 17.8 0.6C18.6 5 18.4 9.5 15 12C11.5 14.5 6 15.2 2.2 16.3Z" fill="#62B543"/><path d="M3.5 15.5L4.5 18L7 15" fill="#62B543"/><path d="M7.5 14.8L10.5 9.3H16.5L19.5 14.8L16.5 20.3H10.5Z" fill="#B9C1C9" stroke="#3C3F41" stroke-width="1.1"/><path d="M11.6 13.2A2.7 2.7 0 1 0 15.4 13.2" stroke="#26282A" stroke-width="1.3" fill="none"/><path d="M13.5 11.4V14.6" stroke="#26282A" stroke-width="1.4"/><circle cx="17.5" cy="18" r="2.3" fill="#3CCC3C"/></svg>
<div class="t" style="left:116.7px;top:684.28px;font-size:16.8px;color:#BBBBBB;">TicketApplication</div>
<svg class="a" style="left:251px;top:687px;" width="10" height="10" viewBox="0 0 10 10"><path d="M1 1L9 9M9 1L1 9" stroke="#75787A" stroke-width="1.3"/></svg>
<svg class="a" style="left:1832px;top:681px;" width="18" height="18" viewBox="0 0 18 18"><path d="M7.5 0.5H10.5L11 2.8L13.1 4L15.4 3.2L16.9 5.8L15.1 7.4V10.6L16.9 12.2L15.4 14.8L13.1 14L11 15.2L10.5 17.5H7.5L7 15.2L4.9 14L2.6 14.8L1.1 12.2L2.9 10.6V7.4L1.1 5.8L2.6 3.2L4.9 4L7 2.8Z" fill="#AFB1B3"/><circle cx="9" cy="9" r="2.8" fill="#3C3F41"/></svg>
<div class="a" style="left:1863px;top:689px;width:17px;height:2px;background:#AFB1B3;"></div>
<div class="a" style="left:62px;top:706px;width:88px;height:38px;background:#4E5254;"></div>
<svg class="a" style="left:69px;top:717px;" width="16" height="14" viewBox="0 0 16 14"><rect x="0" y="0" width="16" height="14" fill="#AFB1B3"/><path d="M5 3.5L9 7L5 10.5" stroke="#3C3F41" stroke-width="1.8" fill="none"/></svg>
<div class="t" style="left:91px;top:715.77px;font-size:14.45px;color:#BBBBBB;">Console</div>
<div class="a" style="left:150px;top:706px;width:1px;height:33px;background:#35373A;"></div>
<svg class="a" style="left:156px;top:713px;" width="20" height="20" viewBox="0 0 20 20"><path d="M4 15L10 4L16 15" stroke="#E07F24" stroke-width="2.2" fill="none"/><circle cx="10" cy="4" r="3.2" fill="#E07F24"/><circle cx="4" cy="15.5" r="3.5" fill="#E07F24"/><circle cx="16" cy="15.5" r="3.5" fill="#E07F24"/></svg>
<div class="t" style="left:179px;top:715.05px;font-size:15.29px;color:#BBBBBB;">Endpoints</div>
<div class="a" style="left:250px;top:706px;width:1px;height:33px;background:#35373A;"></div>
<svg class="a" style="left:34px;top:716px;" width="20" height="19" viewBox="0 0 20 19"><path d="M9 16A6.5 6.5 0 1 1 13 4.5" stroke="#499C54" stroke-width="2.6" fill="none"/><path d="M11 0L18 4.5L11 9Z" fill="#499C54"/><rect x="11" y="11" width="7" height="7" fill="#AFB1B3"/></svg>
<div class="a" style="left:36px;top:752px;width:14px;height:13px;background:#DB5C5C;"></div>
<div class="a" style="left:38px;top:782px;width:4px;height:14px;background:#AFB1B3;"></div>
<div class="a" style="left:45px;top:782px;width:4px;height:14px;background:#AFB1B3;"></div>
<svg class="a" style="left:34px;top:815px;" width="19" height="17" viewBox="0 0 19 17"><path d="M0 4H5L7 0H12L14 4H19V17H0Z" fill="#AFB1B3"/><circle cx="9.5" cy="10" r="3.6" fill="none" stroke="#3C3F41" stroke-width="1.8"/></svg>
<svg class="a" style="left:34px;top:846px;" width="20" height="19" viewBox="0 0 20 19"><path d="M1 3L5 6M13 3L9 6M0 10H3M0 15L3 13" stroke="#499C54" stroke-width="2"/><ellipse cx="7.5" cy="11" rx="5" ry="7" fill="#499C54"/><path d="M10 17L17 10M12 10H17V15" stroke="#AFB1B3" stroke-width="2.4" fill="none"/></svg>
<svg class="a" style="left:33px;top:879px;" width="20" height="19" viewBox="0 0 20 19"><path d="M4 1H19V18H4V13" stroke="#AFB1B3" stroke-width="2" fill="none"/><path d="M4 1V5" stroke="#AFB1B3" stroke-width="2"/><path d="M1 9.5H9M8 5L13 9.5L8 14Z" stroke="#E05555" stroke-width="2.5" fill="#E05555"/></svg>
<div class="a" style="left:32px;top:908px;width:24px;height:1px;background:#505355;"></div>
<svg class="a" style="left:35px;top:923px;" width="16" height="12" viewBox="0 0 16 12"><rect x="0" y="0" width="7" height="5" fill="#AFB1B3"/><rect x="9" y="0" width="7" height="5" fill="#AFB1B3"/><rect x="0" y="7" width="16" height="5" fill="#AFB1B3"/></svg>
<div class="t" style="left:39px;top:945.30px;font-size:15px;color:#BBBBBB;">»</div>
<svg class="a" style="left:71px;top:756px;" width="16" height="18" viewBox="0 0 16 18"><path d="M8 17V2M2 8L8 2L14 8" stroke="#5B5E60" stroke-width="1.6" fill="none"/></svg>
<svg class="a" style="left:71px;top:789px;" width="16" height="17" viewBox="0 0 16 17"><path d="M8 0V15M2 9L8 15L14 9" stroke="#5B5E60" stroke-width="1.6" fill="none"/></svg>
<div class="a" style="left:65px;top:815px;width:28px;height:28px;background:#4E5254;border-radius:3px"></div>
<svg class="a" style="left:71px;top:821px;" width="17" height="16" viewBox="0 0 17 16"><path d="M0 1.5H16M0 7.5H13A3.2 3.2 0 0 1 13 14H7" stroke="#AFB1B3" stroke-width="2" fill="none"/><path d="M8 10.5L4.5 14L8 17" fill="#AFB1B3"/><rect x="0" y="13" width="3" height="2" fill="#AFB1B3"/></svg>
<div class="a" style="left:65px;top:848px;width:28px;height:28px;background:#4E5254;border-radius:3px"></div>
<svg class="a" style="left:71px;top:853px;" width="17" height="17" viewBox="0 0 17 17"><path d="M0 4H5M0 9H5M0 15H17" stroke="#AFB1B3" stroke-width="2"/><path d="M11 0V11M7 7L11 11L15 7" stroke="#AFB1B3" stroke-width="2" fill="none"/></svg>
<svg class="a" style="left:71px;top:886px;" width="17" height="16" viewBox="0 0 17 16"><rect x="3" y="0" width="11" height="4" fill="#AFB1B3"/><rect x="0" y="5" width="17" height="7" fill="#AFB1B3"/><rect x="3" y="10" width="11" height="6" fill="#AFB1B3" stroke="#3C3F41" stroke-width="1.5"/></svg>
<svg class="a" style="left:72px;top:918px;" width="15" height="17" viewBox="0 0 15 17"><rect x="0" y="2" width="15" height="2" fill="#AFB1B3"/><rect x="5" y="0" width="5" height="2" fill="#AFB1B3"/><path d="M1.5 5H13.5L12.5 17H2.5Z" fill="#AFB1B3"/></svg>
<div class="a" style="left:97px;top:744px;width:1783px;height:221px;overflow:hidden">
<div class="t" style="left:16px;top:-7.49px;font-size:15px;color:#BABABA;font-family:'Liberation Mono',monospace;transform:scaleY(0.88);transform-origin:0 11.49px;"><span style="color:#BABABA">Closing non transactional SqlSession [org.apache.ibatis.session.defaults.DefaultSqlSession@1b3c095]</span></div>
<div class="t" style="left:16px;top:13.81px;font-size:15px;color:#BABABA;font-family:'Liberation Mono',monospace;transform:scaleY(0.88);transform-origin:0 11.49px;"><span style="color:#BABABA">2022-02-13 19:58:39.706  </span><span style="color:#A9C22A">INFO</span><span style="color:#BABABA"> </span><span style="color:#A08FC0">16644</span><span style="color:#BABABA"> --- [   scheduling-1] </span><span style="color:#3E9FA3">c.poiu.ticket.domain.job.OrderStatusJob</span><span style="color:#BABABA">  : </span></div>
<div class="t" style="left:16px;top:35.11px;font-size:15px;color:#BABABA;font-family:'Liberation Mono',monospace;transform:scaleY(0.88);transform-origin:0 11.49px;"><span style="color:#BABABA">Creating a new SqlSession</span></div>
<div class="t" style="left:16px;top:56.41px;font-size:15px;color:#BABABA;font-family:'Liberation Mono',monospace;transform:scaleY(0.88);transform-origin:0 11.49px;"><span style="color:#BABABA">SqlSession [org.apache.ibatis.session.defaults.DefaultSqlSession@652e439c] was not registered for synchronization because synchronization is not active</span></div>
<div class="t" style="left:16px;top:77.71px;font-size:15px;color:#BABABA;font-family:'Liberation Mono',monospace;transform:scaleY(0.88);transform-origin:0 11.49px;"><span style="color:#BABABA">JDBC Connection [HikariProxyConnection@748405708 wrapping com.mysql.cj.jdbc.ConnectionImpl@74fb324a] will not be managed by Spring</span></div>
<div class="t" style="left:16px;top:99.01px;font-size:15px;color:#BABABA;font-family:'Liberation Mono',monospace;transform:scaleY(0.88);transform-origin:0 11.49px;"><span style="color:#BABABA">==&gt;  Preparing: update tp_ticket set ticket_status = 3 where ticket_status = 2 and start_time &lt; now();</span></div>
<div class="t" style="left:16px;top:120.31px;font-size:15px;color:#BABABA;font-family:'Liberation Mono',monospace;transform:scaleY(0.88);transform-origin:0 11.49px;"><span style="color:#BABABA">==&gt; Parameters: </span></div>
<div class="t" style="left:16px;top:141.61px;font-size:15px;color:#BABABA;font-family:'Liberation Mono',monospace;transform:scaleY(0.88);transform-origin:0 11.49px;"><span style="color:#BABABA">&lt;==    Updates: 0</span></div>
<div class="t" style="left:16px;top:162.91px;font-size:15px;color:#BABABA;font-family:'Liberation Mono',monospace;transform:scaleY(0.88);transform-origin:0 11.49px;"><span style="color:#BABABA">Closing non transactional SqlSession [org.apache.ibatis.session.defaults.DefaultSqlSession@652e439c]</span></div>
<div class="t" style="left:16px;top:184.21px;font-size:15px;color:#BABABA;font-family:'Liberation Mono',monospace;transform:scaleY(0.88);transform-origin:0 11.49px;"><span style="color:#BABABA">2022-02-13 19:58:39.708  </span><span style="color:#A9C22A">INFO</span><span style="color:#BABABA"> </span><span style="color:#A08FC0">16644</span><span style="color:#BABABA"> --- [   scheduling-1] </span><span style="color:#3E9FA3">c.p.ticket.domain.job.TicketStatusJob</span><span style="color:#BABABA">    : </span></div>
<svg class="a" style="left:925.0px;top:12.3px;" width="15" height="16" viewBox="0 0 15 16"><path d="M1 1.5H14M3 4H12V9.5H3ZM3 6.75H12M7.5 1.5V10L3.5 14.5M5.5 10.5L13.5 14.5" stroke="#BABABA" stroke-width="1.15" fill="none" transform="translate(0 0.5)"/></svg>
<svg class="a" style="left:939.9px;top:12.3px;" width="15" height="16" viewBox="0 0 15 16"><path d="M3.5 0.5V2M0.5 2.5H7.5M2 4L3 6M6 4L5 6M0.5 6.5H7.5M4 6.5V14.5M4 9L0.5 13M4 9L7 12M13.5 0.5L9 2.5V14.5M9 7H14.5M12 7V14.5" stroke="#BABABA" stroke-width="1.15" fill="none" transform="translate(0 0.5)"/></svg>
<svg class="a" style="left:954.8px;top:12.3px;" width="15" height="16" viewBox="0 0 15 16"><path d="M1.5 1L3 2.5M0.5 5.5H3V12L5 10.5M6 2H14.5M10.5 2V14L8.5 13" stroke="#BABABA" stroke-width="1.15" fill="none" transform="translate(0 0.5)"/></svg>
<svg class="a" style="left:969.7px;top:12.3px;" width="15" height="16" viewBox="0 0 15 16"><path d="M4 0.5L5.5 2.5M11 0.5L9.5 2.5M2.5 3.5H12.5V10H2.5ZM2.5 6.75H12.5M7.5 3.5V15M0.5 12H14.5" stroke="#BABABA" stroke-width="1.15" fill="none" transform="translate(0 0.5)"/></svg>
<svg class="a" style="left:984.6px;top:12.3px;" width="15" height="16" viewBox="0 0 15 16"><path d="M4 0.5L0.5 7M2.5 4.5V15M9.5 0.5L10.5 2M6 3H14.5M7 5.5H13.5M7 8H13.5M7 10.5H13.5V15H7Z" stroke="#BABABA" stroke-width="1.15" fill="none" transform="translate(0 0.5)"/></svg>
<svg class="a" style="left:999.5px;top:12.3px;" width="15" height="16" viewBox="0 0 15 16"><path d="M7.5 0.5L6.5 2M4 2H11V9H4ZM4 4.3H11M4 6.6H11M1.5 11L0.5 14M4 10.5V14H12L12.5 12M7 10.5L8 12M13.5 10.5L14.5 13" stroke="#BABABA" stroke-width="1.15" fill="none" transform="translate(0 0.5)"/></svg>
<div class="t" style="left:1017px;top:13.81px;font-size:15px;color:#BABABA;font-family:'Liberation Mono',monospace;transform:scaleY(0.88);transform-origin:0 11.49px;">:</div>
<div class="t" style="left:1034px;top:13.81px;font-size:15px;color:#BABABA;font-family:'Liberation Mono',monospace;transform:scaleY(0.88);transform-origin:0 11.49px;">0</div>
<svg class="a" style="left:925.0px;top:182.7px;" width="15" height="16" viewBox="0 0 15 16"><path d="M1 1.5H14M3 4H12V9.5H3ZM3 6.75H12M7.5 1.5V10L3.5 14.5M5.5 10.5L13.5 14.5" stroke="#BABABA" stroke-width="1.15" fill="none" transform="translate(0 0.5)"/></svg>
<svg class="a" style="left:939.9px;top:182.7px;" width="15" height="16" viewBox="0 0 15 16"><path d="M3.5 0.5V2M0.5 2.5H7.5M2 4L3 6M6 4L5 6M0.5 6.5H7.5M4 6.5V14.5M4 9L0.5 13M4 9L7 12M13.5 0.5L9 2.5V14.5M9 7H14.5M12 7V14.5" stroke="#BABABA" stroke-width="1.15" fill="none" transform="translate(0 0.5)"/></svg>
<svg class="a" style="left:954.8px;top:182.7px;" width="15" height="16" viewBox="0 0 15 16"><path d="M1 3H14M6.5 0.5L2.5 8.5H13M9 5.5V15M0.5 11.5H14.5" stroke="#BABABA" stroke-width="1.15" fill="none" transform="translate(0 0.5)"/></svg>
<svg class="a" style="left:969.7px;top:182.7px;" width="15" height="16" viewBox="0 0 15 16"><path d="M1 1H14M2.5 2.5H12.5V6.5H2.5ZM6 2.5V6.5M9 2.5V6.5M3 8.5H12M0.5 10.5H14.5M7.5 10.5V15L6 14M4 12L2 14M11 12L13 14" stroke="#BABABA" stroke-width="1.15" fill="none" transform="translate(0 0.5)"/></svg>
<svg class="a" style="left:984.6px;top:182.7px;" width="15" height="16" viewBox="0 0 15 16"><path d="M4 0.5L0.5 7M2.5 4.5V15M9.5 0.5L10.5 2M6 3H14.5M7 5.5H13.5M7 8H13.5M7 10.5H13.5V15H7Z" stroke="#BABABA" stroke-width="1.15" fill="none" transform="translate(0 0.5)"/></svg>
<svg class="a" style="left:999.5px;top:182.7px;" width="15" height="16" viewBox="0 0 15 16"><path d="M7.5 0.5L6.5 2M4 2H11V9H4ZM4 4.3H11M4 6.6H11M1.5 11L0.5 14M4 10.5V14H12L12.5 12M7 10.5L8 12M13.5 10.5L14.5 13" stroke="#BABABA" stroke-width="1.15" fill="none" transform="translate(0 0.5)"/></svg>
<div class="t" style="left:1017px;top:184.21px;font-size:15px;color:#BABABA;font-family:'Liberation Mono',monospace;transform:scaleY(0.88);transform-origin:0 11.49px;">:</div>
<div class="t" style="left:1034px;top:184.21px;font-size:15px;color:#BABABA;font-family:'Liberation Mono',monospace;transform:scaleY(0.88);transform-origin:0 11.49px;">0</div>
</div>
<div class="a" style="left:62px;top:739px;width:1818px;height:5px;background:#4B4D4F;"></div>
<div class="a" style="left:62px;top:739px;width:88px;height:5px;background:#4E5254;"></div>
<svg class="a" style="left:39px;top:974px;" width="14" height="13" viewBox="0 0 14 13"><rect x="0" y="0" width="14" height="13" fill="#AFB1B3"/><path d="M2.5 3L6 5.5L2.5 8M7 10H11.5" stroke="#3C3F41" stroke-width="1.4" fill="none"/></svg>
<div class="t" style="left:59.4px;top:974.96px;font-size:14.81px;color:#BBBBBB;">Terminal</div>
<svg class="a" style="left:147px;top:972px;" width="16" height="18" viewBox="0 0 16 18"><rect x="0" y="0" width="12" height="13" fill="#AFB1B3"/><rect x="4" y="6" width="12" height="12" fill="#AFB1B3" stroke="#3C3F41" stroke-width="1.4"/><path d="M7 10V16M11 10V16M6 10H9M10 10H13" stroke="#3C3F41" stroke-width="1.2"/></svg>
<div class="t" style="left:167.5px;top:975.38px;font-size:14.32px;color:#BBBBBB;">Java Enterprise</div>
<svg class="a" style="left:294px;top:973px;" width="17" height="14" viewBox="0 0 17 14"><path d="M0 13C1 5 7 1 16 0C15 8 10 13 2 13Z" fill="#AFB1B3"/><path d="M2 12C6 8 9 6 13 3" stroke="#3C3F41" stroke-width="1.2" fill="none"/></svg>
<div class="t" style="left:316px;top:974.90px;font-size:14.88px;color:#BBBBBB;">Spring</div>
<div class="a" style="left:372px;top:966px;width:88px;height:27px;background:#2E3032;"></div>
<svg class="a" style="left:387px;top:972px;" width="15" height="17" viewBox="0 0 15 17"><path d="M0 0L12 7L0 14Z" fill="#AFB1B3"/><circle cx="12" cy="13" r="3" fill="#3CCC3C"/></svg>
<div class="t" style="left:406.7px;top:975.71px;font-size:13.92px;color:#D0D0D0;">4: Run</div>
<div class="a" style="left:406.7px;top:990px;width:8px;height:1px;background:#D0D0D0;"></div>
<svg class="a" style="left:476px;top:972px;" width="14" height="13" viewBox="0 0 14 13"><rect x="0" y="0" width="3" height="2.5" fill="#AFB1B3"/><rect x="4.5" y="0" width="9.5" height="2.5" fill="#AFB1B3"/><rect x="0" y="5" width="3" height="2.5" fill="#AFB1B3"/><rect x="4.5" y="5" width="9.5" height="2.5" fill="#AFB1B3"/><rect x="0" y="10" width="3" height="2.5" fill="#AFB1B3"/><rect x="4.5" y="10" width="9.5" height="2.5" fill="#AFB1B3"/></svg>
<div class="t" style="left:495.7px;top:975.71px;font-size:13.92px;color:#BBBBBB;">6: TODO</div>
<div class="a" style="left:495.7px;top:990px;width:8px;height:1px;background:#BBBBBB;"></div>
<svg class="a" style="left:1789px;top:972px;" width="17" height="17" viewBox="0 0 17 17"><path d="M8.5 1A7 7 0 1 0 15.5 8.5V15.5H8.5" stroke="#AFB1B3" stroke-width="1.8" fill="none"/></svg>
<div class="t" style="left:1811px;top:975.36px;font-size:14.34px;color:#BBBBBB;">Event Log</div>
<svg class="a" style="left:10px;top:1000px;" width="16" height="10" viewBox="0 0 16 10"><rect x="4" y="1" width="11" height="10" fill="none" stroke="#AFB1B3" stroke-width="1.6"/><path d="M1 4V11" stroke="#AFB1B3" stroke-width="1.6"/></svg>
<div class="t" style="left:37px;top:998.03px;font-size:16.5px;color:#BBBBBB;">All files are up-to-date (moments ago)</div>
<div class="t" style="left:1552px;top:999.35px;font-size:14.94px;color:#BBBBBB;">4 chars</div>
<div class="t" style="left:1623px;top:999.38px;font-size:14.9px;color:#BBBBBB;">1:17</div>
<div class="t" style="left:1667px;top:999.66px;font-size:14.57px;color:#BBBBBB;">LF</div>
<svg class="a" style="left:1690px;top:1002px;" width="7" height="5" viewBox="0 0 7 5"><path d="M0 5L3.5 0L7 5Z" fill="#AFB1B3"/></svg>
<div class="t" style="left:1714px;top:999.15px;font-size:15.18px;color:#BBBBBB;">UTF-8</div>
<div class="t" style="left:1771px;top:999.10px;font-size:15.24px;color:#BBBBBB;">4 spaces</div>
<svg class="a" style="left:1840px;top:1002px;" width="7" height="5" viewBox="0 0 7 5"><path d="M0 5L3.5 0L7 5Z" fill="#AFB1B3"/></svg>
<svg class="a" style="left:1862px;top:1000px;" width="15" height="8" viewBox="0 0 15 8"><circle cx="4" cy="4" r="3" fill="none" stroke="#AFB1B3" stroke-width="1.6"/><path d="M4 7V8M7 8H15" stroke="#AFB1B3" stroke-width="1.6"/></svg>
<div class="a" style="left:1655px;top:588px;width:225px;height:28px;background:#FFFFFF;"></div>
<svg class="a" style="left:1651px;top:583px;" width="38" height="37" viewBox="0 0 38 37"><g transform="rotate(-10 19 18)"><rect x="3" y="4" width="32" height="29" rx="6" fill="#F04E23"/><path d="M26 11C22 8 12 9 12 14C12 19 25 17 25 23C25 28 14 28 10 25" stroke="#fff" stroke-width="4.5" fill="none" stroke-linecap="round"/></g></svg>
<svg class="a" style="left:1694px;top:593px;" width="20" height="20" viewBox="0 0 20 20"><path d="M2 5H18V14H2Z" stroke="#1E6FD9" stroke-width="2.6" fill="none"/><path d="M10 1V19" stroke="#1E6FD9" stroke-width="2.8"/></svg>
<svg class="a" style="left:1721px;top:593px;" width="22" height="20" viewBox="0 0 22 20"><circle cx="4" cy="6" r="2.5" fill="none" stroke="#1E6FD9" stroke-width="1.5"/><path d="M14 10C16 10 16 14 12 17" stroke="#1E6FD9" stroke-width="2.6" fill="none"/><circle cx="13.5" cy="11" r="2.2" fill="#1E6FD9"/></svg>
<svg class="a" style="left:1747px;top:592px;" width="22" height="22" viewBox="0 0 22 22"><circle cx="11" cy="11" r="8.5" fill="none" stroke="#1E6FD9" stroke-width="2"/><rect x="7.5" y="7" width="2" height="4" fill="#1E6FD9"/><rect x="12.5" y="7" width="2" height="4" fill="#1E6FD9"/><path d="M6.5 13C8 16 14 16 15.5 13" stroke="#1E6FD9" stroke-width="1.8" fill="none"/></svg>
<svg class="a" style="left:1777px;top:591px;" width="16" height="24" viewBox="0 0 16 24"><rect x="4.5" y="1" width="7" height="13" rx="3.5" fill="#1E6FD9"/><path d="M1.5 10C1.5 18 14.5 18 14.5 10M8 17V22M4 22H12" stroke="#1E6FD9" stroke-width="1.8" fill="none"/></svg>
<svg class="a" style="left:1802px;top:594px;" width="24" height="17" viewBox="0 0 24 17"><rect x="1" y="1" width="22" height="15" rx="1.5" fill="none" stroke="#1E6FD9" stroke-width="2"/><path d="M4 5H6M8 5H10M12 5H14M16 5H18M4 8.5H6M8 8.5H10M12 8.5H14M16 8.5H20M6 12H18" stroke="#1E6FD9" stroke-width="1.8"/></svg>
<svg class="a" style="left:1830px;top:592px;" width="24" height="22" viewBox="0 0 24 22"><circle cx="10" cy="5" r="4" fill="#A9B3C0"/><path d="M3 20C3 10 17 10 17 20Z" fill="#A9B3C0"/><rect x="12" y="12" width="11" height="9" fill="#fff"/><text x="13" y="20.5" font-size="9" font-family="Liberation Sans" fill="#8A96A6">17</text></svg>
<svg class="a" style="left:1857px;top:592px;" width="23" height="22" viewBox="0 0 23 22"><path d="M6 1L1 5L4 10L6 9V21H17V9L19 10L22 5L17 1C15 4 8 4 6 1Z" fill="#1E6FD9"/></svg>
<div class="a" style="left:1828px;top:764px;width:52px;height:28px;background:#FFFFFF;"></div>
<div class="a" style="left:1833px;top:765px;width:0;height:26px;border-left:1px dotted #BBBBBB"></div>
<svg class="a" style="left:1841px;top:766px;" width="23" height="22" viewBox="0 0 23 22"><g transform="rotate(-12 11.5 11)"><rect x="2.5" y="2" width="18" height="18" rx="2.5" fill="#F05A24"/><path d="M16 7C13.5 5 8 5.5 8 8.5C8 11.5 15 10.5 15 13.5C15 16.5 9 17 6.5 15" stroke="#fff" stroke-width="2.6" fill="none" stroke-linecap="round"/></g></svg>
<svg class="a" style="left:1875px;top:770px;" width="5" height="16" viewBox="0 0 5 16"><path d="M0 3H5M0 8H5" stroke="#222" stroke-width="2.2"/><path d="M1 11L3 14L5 11" stroke="#222" stroke-width="1.8" fill="none"/></svg>
<div class="a" style="left:1879px;top:931px;width:1px;height:33px;background:#505355;"></div>
</body></html>
